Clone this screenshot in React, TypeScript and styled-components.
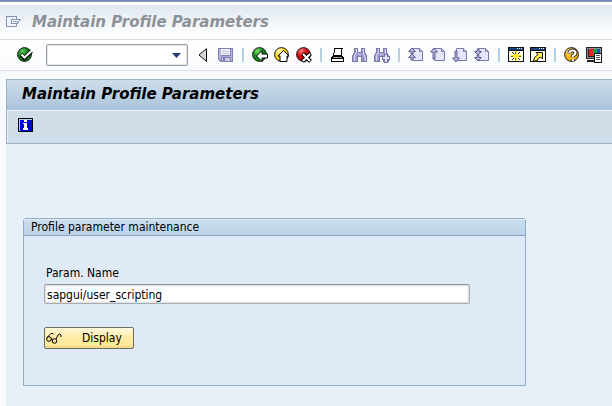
import React from "react";
import styled, { createGlobalStyle } from "styled-components";

const GlobalStyle = createGlobalStyle`
  * { box-sizing: border-box; }
  html, body, #root { height: 100%; }
  body {
    margin: 0;
    background: #fff;
    color: #000;
    font-family: "DejaVu Sans Condensed", "Noto Sans", sans-serif;
    font-size: 12px;
  }
`;

const Window = styled.div`
  display: flex;
  flex-direction: column;
  min-height: 100%;
  overflow: hidden;
  background: #f8fafd;
`;

const WindowTitle = styled.header`
  display: flex;
  align-items: center;
  gap: 10px;
  height: 40px;
  padding: 4px 6px 0;
  border-top: 1px solid #7586b4;
  border-bottom: 1px solid #d9dce1;
  background: linear-gradient(#8797c2 0 1px, #fff 1px 4px, #dfe7f0 4px, #f4f7fa 24px, #fff 39px);
`;

const Heading = styled.span`
  font-family: "DejaVu Sans", sans-serif;
  font-size: 15px;
  line-height: 20px;
  font-weight: bold;
  font-style: italic;
  white-space: nowrap;
  color: #8c9197;
`;

const PageHeading = styled.h1`
  margin: 0;
  padding: 0 16px 2px 15px;
  height: 31px;
  font-family: "DejaVu Sans", sans-serif;
  font-size: 15px;
  line-height: 28px;
  font-weight: bold;
  font-style: italic;
  white-space: nowrap;
  border-bottom: 1px solid #edf4fa;
  background: linear-gradient(#cddeeb, #a9c2da);
`;

const Toolbar = styled.div`
  display: flex;
  align-items: center;
  gap: 6px;
  height: 31px;
  padding: 0 10px 0 17px;
  border-bottom: 1px solid #dcdfe5;
  background: linear-gradient(#fff, #f8fafd);
`;

const IconButton = styled.button`
  display: flex;
  flex: none;
  width: 16px;
  height: 16px;
  padding: 0;
  border: 0;
  background: none;
  color: inherit;
`;

const Separator = styled.span`
  flex: none;
  width: 2px;
  height: 14px;
  margin: 0 2px;
  background: #b5cfe3;
`;

const CommandField = styled.div`
  display: flex;
  flex: none;
  align-items: center;
  width: 142px;
  height: 22px;
  margin: 0 2px 0 7px;
  padding-right: 6px;
  border: 1px solid #9a9ea5;
  border-radius: 2px;
  background: #fff;
  box-shadow: inset 0 0 0 1px #e3e4e8;
`;

const CommandInput = styled.input`
  flex: 1;
  min-width: 0;
  height: 18px;
  border: 0;
  outline: 0;
  background: none;
  font: inherit;
`;

const DropButton = styled.button`
  display: flex;
  padding: 0;
  border: 0;
  background: none;
`;

const Page = styled.main`
  flex: 1;
  margin: 8px 0 0 6px;
  background: #e8f0f7;
`;

const PageHeader = styled.div`
  border: 1px solid #9bb2c6;
  border-right: 0;
  box-shadow: inset 1px 1px #e5eff7;
  background: #cfdde8;
`;

const AppToolbar = styled.div`
  display: flex;
  align-items: center;
  height: 32px;
  padding: 0 11px 4px;
`;

const Group = styled.section`
  width: calc(100% - 103px);
  min-width: 240px;
  margin: 74px 0 0 17px;
  border: 1px solid #8fadca;
  border-radius: 3px 3px 0 0;
  background: #deeaf6;
`;

const GroupTitle = styled.h2`
  margin: 0;
  height: 17px;
  padding-left: 7px;
  border-bottom: 1px solid #86a4c8;
  border-radius: 2px 2px 0 0;
  box-shadow: inset 0 1px #e0edf7;
  background: linear-gradient(#cbdeee, #bcd3e7);
  font-size: 12px;
  line-height: 17px;
  font-weight: normal;
`;

const Form = styled.form`
  display: flex;
  flex-direction: column;
  align-items: flex-start;
  padding: 29px 55px 36px 20px;
`;

const Label = styled.label`
  margin-left: 2px;
  line-height: 16px;
`;

const TextField = styled.input`
  width: 100%;
  height: 20px;
  margin: 3px 0 23px;
  padding: 2px 2px 0;
  border: 1px solid #a9abae;
  border-top-color: #919499;
  border-radius: 2px;
  outline: 0;
  background: #fff;
  box-shadow: inset 0 0 2px 1px #d8dae0;
  color: #000;
  font: inherit;
`;

const DisplayButton = styled.button`
  display: flex;
  align-items: center;
  gap: 20px;
  width: 90px;
  height: 22px;
  padding: 0 1px;
  border: 1px solid #6d6c63;
  border-radius: 2px;
  background: linear-gradient(#fff8dc, #ffeda6 45%, #ffe897 85%, #eed587);
  color: #000;
  font: inherit;
  line-height: 20px;
`;

type IconProps = { children: React.ReactNode; crisp?: boolean };

const Icon = ({ children, crisp }: IconProps) => (
  <svg width="16" height="16" viewBox="0 0 16 16" fill="none" aria-hidden="true"
    shapeRendering={crisp ? "crispEdges" : "auto"}>
    {children}
  </svg>
);

const Ball = ({ from, to, id, children }: { from: string; to: string; id: string; children: React.ReactNode }) => (
  <Icon>
    <defs>
      <radialGradient id={id} cx="0.35" cy="0.25" r="0.8">
        <stop offset="0" stopColor={from} />
        <stop offset="0.5" stopColor={to} />
        <stop offset="1" stopColor={to} />
      </radialGradient>
    </defs>
    <circle cx="7.5" cy="7.5" r="6.9" fill={`url(#${id})`} stroke="#1a1a1a" />
    {children}
  </Icon>
);

const EnterIcon = () => (
  <Ball id="enter" from="#5cc95a" to="#0c7d1a">
    <path d="M4 7.5l3.5 3.5L14.5 4" stroke="#000" strokeWidth="4" />
    <path d="M4.5 7.5l3 3L15 3.5" stroke="#fff" strokeWidth="2.3" />
  </Ball>
);
const ExitBackIcon = () => (
  <Ball id="back" from="#7be06c" to="#0e8a1c">
    <path d="M4.5 9l5.5-5.5V7h5.5v4H10v3.5z" fill="#fff" stroke="#000" />
  </Ball>
);
const ExitIcon = () => (
  <Ball id="exit" from="#fffcc0" to="#fccb08">
    <path d="M9.5 3.5L15 9h-2v5.5H6V9H4z" fill="#fff" stroke="#000" />
  </Ball>
);
const CancelIcon = () => (
  <Ball id="cancel" from="#ff8078" to="#d4040c">
    <path d="M6.5 6.5l8 8m0-8l-8 8" stroke="#000" strokeWidth="4" />
    <path d="M7 7l7 7m0-7l-7 7" stroke="#fff" strokeWidth="2.1" />
  </Ball>
);
const HelpIcon = () => (
  <Ball id="help" from="#fff48a" to="#fbb40c">
    <path d="M5.5 6.5V5.5q0-2 3-2t3 2.5q0 1.5-2.7 3V10.5M8.8 12v2.5" stroke="#222" strokeWidth="3.8" />
    <path d="M5.5 6.2V5.5q0-2 3-2t3 2.5q0 1.5-2.7 3V10.5M8.8 12v2.3" stroke="#fff" strokeWidth="2.2" />
  </Ball>
);
const PreviousIcon = () => (
  <Icon>
    <path d="M10 2v12L3 8z" fill="#d6d7da" />
    <path d="M10 2L3 8l7 6" stroke="#111" />
    <path d="M10.5 1.5v13" stroke="#000" />
  </Icon>
);
const SaveIcon = () => (
  <Icon crisp>
    <path d="M0 1h15v14H2l-2-2z" fill="#8080b4" />
    <path d="M1 2h2v11H1zM13 2h1v12h-1z" fill="#b4b4de" />
    <path d="M3 9h10v1H3z" fill="#a8a8d6" />
    <path d="M3 2h9v6H3z" fill="#f0f0f6" />
    <path d="M4 4h7v1H4zM4 6h7v1H4z" fill="#c6c7da" />
    <path d="M4 11h8v3H4z" fill="#cfd0e6" />
    <path d="M5 11h2v3H5z" fill="#7676ae" />
  </Icon>
);
const PrintIcon = () => (
  <Icon crisp>
    <path d="M4 1h9v1h-1v7H3V6h1z" fill="#000" />
    <path d="M5 2h6v6H4V6h1z" fill="#fff" />
    <path d="M1 10h1V9h11v1h1v5H1z" fill="#000" />
    <path d="M3 10h9v1H3z" fill="#9b9ba0" />
    <path d="M2 12h11v2H2z" fill="#fff" />
  </Icon>
);
const binocularBody = (
  <>
    <path d="M2.5 1.5h3v4h4v-4h3v3l2 5v5h-5v-5h-4v5h-5v-5l2-5z" fill="#9b9bd0" stroke="#7777ad" />
    <path d="M4 2v4l-2 4v4M11 2v4l2 4v4" stroke="#dadaf8" />
    <path d="M6 7h3" stroke="#b9b9e4" strokeWidth="2" />
  </>
);
const FindIcon = () => <Icon crisp>{binocularBody}</Icon>;
const FindNextIcon = () => (
  <Icon crisp>
    {binocularBody}
    <path d="M10 7h3v2h2v3h-2v3h-3v-3H8V9h2z" fill="#e7e7fc" stroke="#7272aa" />
  </Icon>
);
const arrowPaths = {
  first: ["M4 1l3.5 3.5H5V7H3V4.500H.5z", "M4 7l3.500 3.500H5V13H3v-2.500H.5z"],
  previous: ["M4 1l3.500 4H5v7H3V5H.5z"],
  next: ["M3 4h2v7h2.500L4 15 .5 11H3z"],
  last: ["M3 2h2v2.500h2.500L4 8 .5 4.500H3z", "M3 8h2v2.500h2.500L4 14 .5 10.500H3z"],
};
const PageIcon = ({ direction }: { direction: keyof typeof arrowPaths }) => (
  <Icon>
    <path d="M4.500 1.500h7l3 3v9h-10z" fill="#e5e5fb" stroke="#7a7aa8" />
    <path d="M11.500 1.500v3h3" stroke="#7a7aa8" />
    {arrowPaths[direction].map((d) => (
      <path key={d} d={d} fill="#b4b4e4" stroke="#62628e" />
    ))}
  </Icon>
);
const windowFrame = (
  <>
    <path d="M0 0h16v15H0z" fill="#111" />
    <path d="M1 1h14v2H1z" fill="#1f4389" />
    <path d="M9 1h1v1H9zM11 1h1v1h-1zM13 1h1v1h-1z" fill="#fff" />
    <path d="M1 4h14v10H1z" fill="#fffde9" />
  </>
);
const NewSessionIcon = () => (
  <Icon crisp>
    {windowFrame}
    <path d="M7 4h2v10H7zM3 8h10v2H3z" fill="#ffe51f" />
    <path d="M6 7h4v4H6z" fill="#ffe51f" />
    <path d="M4 5h1v1H4zM5 6h1v1H5zM11 5h1v1h-1zM10 6h1v1h-1zM4 12h1v1H4zM5 11h1v1H5zM11 12h1v1h-1zM10 11h1v1h-1z" fill="#222" />
    <path d="M7 5h1v2H7zM7 11h1v2H7zM3 9h2v1H3zM11 9h2v1h-2z" fill="#6d5c00" />
  </Icon>
);
const ShortcutIcon = () => (
  <Icon>
    {windowFrame}
    <path d="M6 5.500h6.500V12l-2-2q-3 1-3.500 4H3.500q0-4 4.500-6.500z" fill="#ffed48" stroke="#111" />
  </Icon>
);
const LayoutIcon = () => (
  <Icon crisp>
    <path d="M0 0h16v12H0zM1 13h8v2H1z" fill="#222" />
    <path d="M1 1h14v10H1z" fill="#8c8f94" />
    <path d="M2 2h12v8H2z" fill="#222" />
    <path d="M3 2h4v7H3z" fill="#e82326" />
    <path d="M7 2h4v7H7z" fill="#16a33b" />
    <path d="M11 2h3v7h-3z" fill="#2149cf" />
    <path d="M8 6h8v10H8z" fill="#111" />
    <path d="M9 7h6v8H9z" fill="#fff" />
    <path d="M10 8h4v1h-4zM10 10h4v1h-4zM10 12h4v1h-4z" fill="#555" />
  </Icon>
);
const InfoIcon = () => (
  <Icon crisp>
    <path d="M0 1h15v14H0z" fill="#000" />
    <path d="M1 2h13v12H1z" fill="#a8d8ee" />
    <path d="M2 3h12v11H2z" fill="#0000e5" />
    <path d="M6 3h3v2H6zM5 6h4v5h1v2H5v-2h1V7H5z" fill="#fff" />
  </Icon>
);
const GlassesIcon = () => (
  <Icon>
    <g stroke="#000">
      <circle cx="3" cy="9" r="2.300" />
      <circle cx="8.500" cy="11" r="2.300" />
      <path d="M5 9q1-1 1.500 1M1 7.500L5 3.500q2-1 2 1M10 9l2-4q2-2 3 0v2" />
    </g>
  </Icon>
);
const WindowMenuIcon = () => (
  <Icon crisp>
    <path d="M10.500 5v-2.500H.5v10h10V10" stroke="#8492b5" />
    <path d="M5.500 5.500h9L11 9.500H5.500zM7 7.500h4" fill="#fff" stroke="#8492b5" />
  </Icon>
);

const tools: { label: string; icon: React.ReactNode }[][] = [
  [
    { label: "Back", icon: <ExitBackIcon /> },
    { label: "Exit", icon: <ExitIcon /> },
    { label: "Cancel", icon: <CancelIcon /> },
  ],
  [
    { label: "Print", icon: <PrintIcon /> },
    { label: "Find", icon: <FindIcon /> },
    { label: "Find next", icon: <FindNextIcon /> },
  ],
  [
    { label: "First page", icon: <PageIcon direction="first" /> },
    { label: "Previous page", icon: <PageIcon direction="previous" /> },
    { label: "Next page", icon: <PageIcon direction="next" /> },
    { label: "Last page", icon: <PageIcon direction="last" /> },
  ],
  [
    { label: "Create new session", icon: <NewSessionIcon /> },
    { label: "Create shortcut", icon: <ShortcutIcon /> },
  ],
  [
    { label: "Help", icon: <HelpIcon /> },
    { label: "Customize local layout", icon: <LayoutIcon /> },
  ],
];

export default function App() {
  return (
    <Window>
      <GlobalStyle />
      <WindowTitle>
        <IconButton aria-label="System menu"><WindowMenuIcon /></IconButton>
        <Heading>Maintain Profile Parameters</Heading>
      </WindowTitle>
      <Toolbar role="toolbar" aria-label="Standard toolbar">
        <IconButton aria-label="Enter"><EnterIcon /></IconButton>
        <CommandField>
          <CommandInput aria-label="Command" />
          <DropButton aria-label="Command history">
            <svg width="9" height="5" viewBox="0 0 9 5" aria-hidden="true">
              <path d="M0 0h9L4.500 5z" fill="#233b73" />
            </svg>
          </DropButton>
        </CommandField>
        <IconButton aria-label="Close command field"><PreviousIcon /></IconButton>
        <IconButton aria-label="Save"><SaveIcon /></IconButton>
        {tools.map((group) => (
          <React.Fragment key={group[0].label}>
            <Separator />
            {group.map(({ label, icon }) => (
              <IconButton key={label} aria-label={label}>{icon}</IconButton>
            ))}
          </React.Fragment>
        ))}
      </Toolbar>
      <Page>
        <PageHeader>
          <PageHeading>Maintain Profile Parameters</PageHeading>
          <AppToolbar>
            <IconButton aria-label="Information"><InfoIcon /></IconButton>
          </AppToolbar>
        </PageHeader>
        <Group>
          <GroupTitle>Profile parameter maintenance</GroupTitle>
          <Form onSubmit={(event) => event.preventDefault()}>
            <Label htmlFor="param">Param. Name</Label>
            <TextField id="param" defaultValue="sapgui/user_scripting" spellCheck={false} />
            <DisplayButton type="submit"><GlassesIcon />Display</DisplayButton>
          </Form>
        </Group>
      </Page>
    </Window>
  );
}
